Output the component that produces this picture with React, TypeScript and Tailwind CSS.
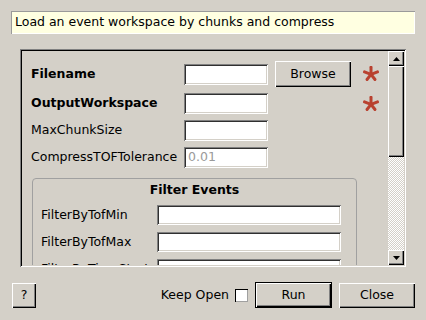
const raised =
  'bg-[#d4d0c8] shadow-[inset_1px_1px_0_#ffffff,inset_-1px_-1px_0_#000000,inset_-2px_-2px_0_#808080]'
const sunken =
  'bg-white shadow-[inset_1px_1px_0_#808080,inset_-1px_-1px_0_#ffffff,inset_2px_2px_0_#303030,inset_-2px_-2px_0_#d4d0c8]'

function Asterisk() {
  const pts = [
    [8, 1.2],
    [14.5, 5.9],
    [12, 13.5],
    [4, 13.5],
    [1.5, 5.9],
  ]
  return (
    <svg width="16" height="16" viewBox="0 0 16 16" className="shrink-0">
      {pts.map(([x, y], i) => (
        <line key={i} x1="8" y1="8.3" x2={x} y2={y} stroke="#b9412f" strokeWidth="3" strokeLinecap="round" />
      ))}
    </svg>
  )
}

function Row({ label, bold, value, browse, required }: { label: string; bold?: boolean; value?: string; browse?: boolean; required?: boolean }) {
  return (
    <div className={`flex items-center ${browse ? 'h-[26px]' : 'h-[21px]'}`}>
      <div className={`w-[153px] whitespace-nowrap ${bold ? 'font-bold' : ''}`}>{label}</div>
      <div className={`w-[84px] h-[21px] ${sunken} flex items-center px-[4px] text-[#9a9a9a]`}>{value}</div>
      {browse ? (
        <button className={`ml-[7px] w-[76px] h-[26px] ${raised}`}>Browse</button>
      ) : (
        <div className="ml-[7px] w-[76px]" />
      )}
      {required && (
        <div className="ml-[12px]">
          <Asterisk />
        </div>
      )}
    </div>
  )
}

function FilterRow({ label }: { label: string }) {
  return (
    <div className="flex items-center h-[20px]">
      <div className="w-[116px] whitespace-nowrap">{label}</div>
      <div className={`w-[184px] h-[20px] ${sunken}`} />
    </div>
  )
}

export default function App() {
  return (
    <div className="w-[426px] h-[320px] bg-[#d4d0c8] text-black text-[12.5px] font-['DejaVu_Sans',sans-serif] overflow-hidden flex flex-col">
      <div className="mx-[11px] mt-[11px] h-[23px] bg-[#ffffe1] shadow-[inset_1px_1px_0_#9a9a9a,inset_-1px_-1px_0_#ffffff] flex items-center px-[4px]">
        Load an event workspace by chunks and compress
      </div>

      <div className="ml-[20px] mt-[15px] w-[386px] h-[218px] p-[2px] shadow-[inset_1px_1px_0_#808080,inset_-1px_-1px_0_#ffffff,inset_2px_2px_0_#000000,inset_-2px_-2px_0_#d4d0c8] flex">
        <div className="flex-1 overflow-hidden pt-[10px] pl-[9px]">
          <div className="flex flex-col gap-[6px]">
            <Row label="Filename" bold browse required />
            <Row label="OutputWorkspace" bold required />
            <Row label="MaxChunkSize" />
            <Row label="CompressTOFTolerance" value="0.01" />
          </div>

          <div className="ml-[1px] mt-[10px] w-[325px] rounded-[4px] border border-[#a0a0a0] pl-[8px] pb-[10px]">
            <div className="font-bold text-center h-[18px] leading-[18px] mt-[2px] pr-[8px]">Filter Events</div>
            <div className="mt-[6px] flex flex-col gap-[7px]">
              <FilterRow label="FilterByTofMin" />
              <FilterRow label="FilterByTofMax" />
              <FilterRow label="FilterByTimeStart" />
              <FilterRow label="FilterByTimeStop" />
            </div>
          </div>
        </div>

        <div className="w-[16px] flex flex-col">
          <div className={`h-[15px] ${raised} flex items-center justify-center`}>
            <svg width="7" height="4" viewBox="0 0 7 4">
              <polygon points="3.5,0 7,4 0,4" fill="#000" />
            </svg>
          </div>
          <div className={`h-[91px] ${raised}`} />
          <div className="flex-1 bg-[image:repeating-conic-gradient(#ffffff_0_25%,#d4d0c8_0_50%)] bg-[length:2px_2px]" />
          <div className={`h-[15px] ${raised} flex items-center justify-center`}>
            <svg width="7" height="4" viewBox="0 0 7 4">
              <polygon points="0,0 7,0 3.5,4" fill="#000" />
            </svg>
          </div>
        </div>
      </div>

      <div className="mt-[15px] h-[26px] flex items-center pl-[12px] pr-[11px]">
        <button className={`w-[24px] h-[25px] ${raised}`}>?</button>
        <div className="flex-1" />
        <span>Keep Open</span>
        <div className="ml-[6px] w-[13px] h-[13px] bg-white shadow-[inset_1px_1px_0_#000000,inset_-1px_-1px_0_#a0a0a0]" />
        <button className="ml-[7px] w-[77px] h-[26px] border border-black">
          <div className={`w-full h-full ${raised} flex items-center justify-center`}>Run</div>
        </button>
        <button className={`ml-[7px] w-[76px] h-[25px] ${raised}`}>Close</button>
      </div>
    </div>
  )
}
